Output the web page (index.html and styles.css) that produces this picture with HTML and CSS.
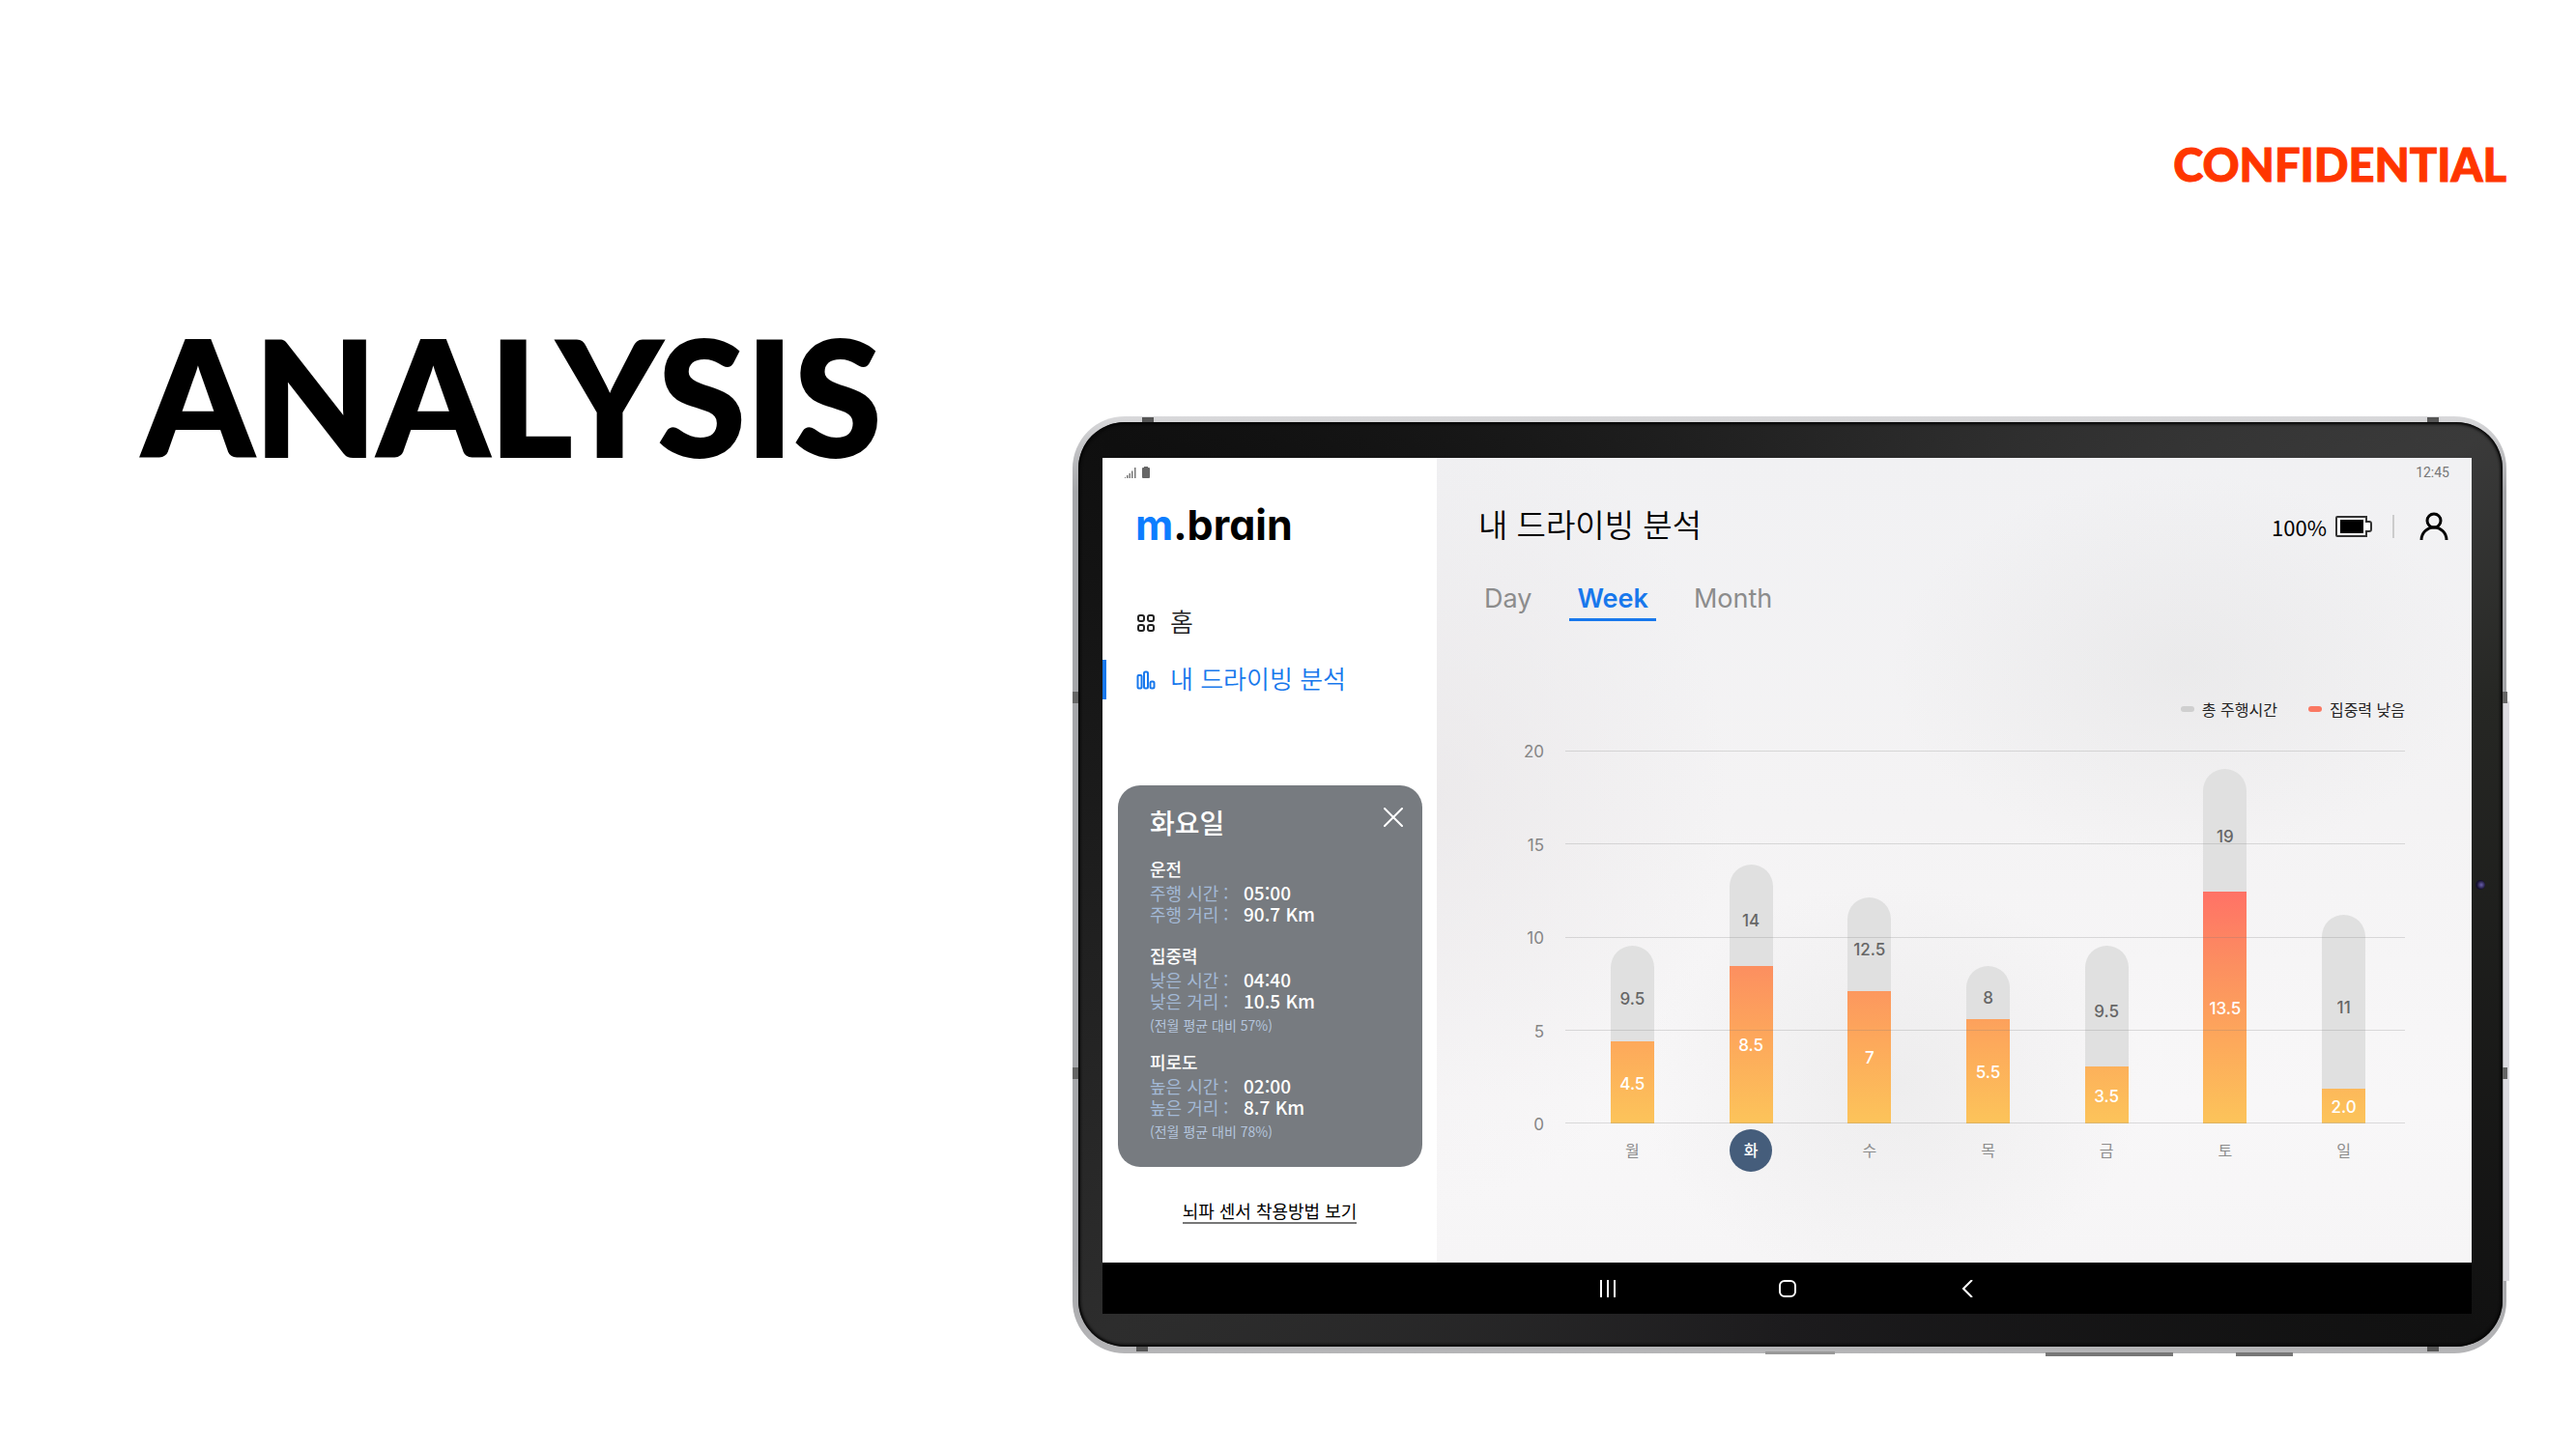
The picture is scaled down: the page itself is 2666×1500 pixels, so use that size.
FILE: index.html
```html
<!DOCTYPE html>
<html lang="ko">
<head>
<meta charset="utf-8">
<meta name="viewport" content="width=device-width, initial-scale=1">
<title>m.brain – Analysis</title>
<link rel="stylesheet" href="styles.css">
</head>
<body>
<div class="slide">
  <header class="slide-header"><p class="confidential">CONFIDENTIAL</p></header>
  <div class="slide-body">
    <h1 class="slide-title">ANALYSIS</h1>
    <div class="device">
      <span class="mark mark-tl"></span><span class="mark mark-tr"></span>
      <span class="mark mark-bl"></span><span class="mark mark-br"></span>
      <span class="seam seam-l1"></span><span class="seam seam-l2"></span>
      <span class="rail"></span>
      <span class="seam seam-r1"></span><span class="seam seam-r2"></span>
      <span class="key key-port"></span><span class="key key-volume"></span><span class="key key-power"></span>
      <div class="bezel">
        <span class="camera"></span>
        <div class="screen">
          <div class="app">
            <aside class="sidebar">
              <div class="status status-left">
                <svg width="12" height="12" viewBox="0 0 12 12" fill="#777"><path d="M0 12v-1h1v1zM2 12v-3h1.500v3zM4.500 12V7H6v5zM7 12V4.500h1.500V12zM10 12V1h1.500v11z"/></svg>
                <svg width="8" height="12" viewBox="0 0 8 12" fill="#666"><path d="M2 0h4v1h1q1 0 1 1v9q0 1-1 1H1q-1 0-1-1V2q0-1 1-1h1z"/></svg>
              </div>
              <div class="logo"><span class="logo-m">m</span>.brain</div>
              <nav class="menu">
                <a class="menu-item" href="#home">
                  <svg width="20" height="20" viewBox="0 0 20 20" fill="none" stroke="#222" stroke-width="2"><rect x="2" y="2" width="6" height="6" rx="2"/><rect x="12" y="2" width="6" height="6" rx="2"/><rect x="2" y="12" width="6" height="6" rx="2"/><rect x="12" y="12" width="6" height="6" rx="2"/></svg>
                  <span>홈</span>
                </a>
                <a class="menu-item menu-item-active" href="#analysis" aria-current="page">
                  <svg width="20" height="20" viewBox="0 0 20 20" fill="none" stroke="#1878ec" stroke-width="2"><rect x="1.500" y="5" width="4" height="13.500" rx="1"/><rect x="8" y="1.500" width="4" height="17" rx="1.500"/><rect x="14.500" y="11.500" width="4" height="7" rx="1.500"/></svg>
                  <span>내 드라이빙 분석</span>
                </a>
              </nav>
              <section class="card">
                <div class="card-head">
                  <h2 class="card-title">화요일</h2>
                  <button class="close" type="button" aria-label="닫기"><svg width="20" height="20" viewBox="0 0 20 20" stroke="#fff" stroke-width="2" stroke-linecap="round"><path d="M1 1l18 18M19 1L1 19"/></svg></button>
                </div>
                <div class="group">
                  <h3>운전</h3>
                  <dl><dt>주행 시간 :</dt><dd>05:00</dd><dt>주행 거리 :</dt><dd>90.7 Km</dd></dl>
                </div>
                <div class="group">
                  <h3>집중력</h3>
                  <dl><dt>낮은 시간 :</dt><dd>04:40</dd><dt>낮은 거리 :</dt><dd>10.5 Km</dd></dl>
                  <p>(전월 평균 대비 57%)</p>
                </div>
                <div class="group">
                  <h3>피로도</h3>
                  <dl><dt>높은 시간 :</dt><dd>02:00</dd><dt>높은 거리 :</dt><dd>8.7 Km</dd></dl>
                  <p>(전월 평균 대비 78%)</p>
                </div>
              </section>
              <a class="guide" href="#guide">뇌파 센서 착용방법 보기</a>
            </aside>
            <main class="main">
              <div class="status status-right">12:45</div>
              <div class="main-head">
                <h2 class="main-title">내 드라이빙 분석</h2>
                <div class="tools">
                  <span class="charge">100%</span>
                  <svg width="38" height="22" viewBox="0 0 38 22"><path d="M2 1h30v5h3q2 0 2 2v6q0 2-2 2h-3v5H2q-1 0-1-1V2q0-1 1-1z" fill="#fff" stroke="#333" stroke-width="2"/><path d="M5 4h24v14H5z"/></svg>
                  <span class="divider"></span>
                  <button class="user" type="button" aria-label="내 정보"><svg width="30" height="30" viewBox="0 0 30 30" fill="none" stroke="#000" stroke-width="3"><circle cx="15" cy="9" r="7"/><path d="M2 29a13 13 0 0 1 26 0"/></svg></button>
                </div>
              </div>
              <div class="tabs" role="tablist">
                <button class="tab" type="button" role="tab" aria-selected="false">Day</button>
                <button class="tab tab-active" type="button" role="tab" aria-selected="true">Week</button>
                <button class="tab" type="button" role="tab" aria-selected="false">Month</button>
              </div>
              <div class="legend"><span class="legend-item">총 주행시간</span><span class="legend-item legend-low">집중력 낮음</span></div>
              <div class="chart">
                <div class="y-axis"><span>20</span><span>15</span><span>10</span><span>5</span><span>0</span></div>
                <div class="plot">
                  <div class="bars">
                    <div class="bar" style="--total:9.55"><span class="rest">9.5</span><span class="low" style="--low:4.4">4.5</span></div>
                    <div class="bar" style="--total:13.9"><span class="rest">14</span><span class="low" style="--low:8.45">8.5</span></div>
                    <div class="bar" style="--total:12.15"><span class="rest">12.5</span><span class="low" style="--low:7.1">7</span></div>
                    <div class="bar" style="--total:8.45"><span class="rest">8</span><span class="low" style="--low:5.6">5.5</span></div>
                    <div class="bar" style="--total:9.55"><span class="rest">9.5</span><span class="low" style="--low:3.05">3.5</span></div>
                    <div class="bar" style="--total:19"><span class="rest">19</span><span class="low" style="--low:12.45">13.5</span></div>
                    <div class="bar" style="--total:11.2"><span class="rest">11</span><span class="low" style="--low:1.85">2.0</span></div>
                  </div>
                  <div class="lines"><i></i><i></i><i></i><i></i><i></i></div>
                </div>
                <div class="x-axis"><span>월</span><span class="today">화</span><span>수</span><span>목</span><span>금</span><span>토</span><span>일</span></div>
              </div>
            </main>
          </div>
          <nav class="system-bar">
            <button type="button" aria-label="최근 앱"><svg width="18" height="18" viewBox="0 0 18 18" stroke="#fff" stroke-width="2"><path d="M2 0v18M9 0v18M16 0v18"/></svg></button>
            <button type="button" aria-label="홈 화면"><svg width="18" height="18" viewBox="0 0 18 18" fill="none" stroke="#fff" stroke-width="2"><rect x="1" y="1" width="16" height="16" rx="5"/></svg></button>
            <button type="button" aria-label="뒤로"><svg width="18" height="18" viewBox="0 0 18 18" fill="none" stroke="#fff" stroke-width="2"><path d="M14 0L5 9l9 9"/></svg></button>
          </nav>
        </div>
      </div>
    </div>
  </div>
</div>
</body>
</html>
```
FILE: styles.css
```css
* { box-sizing: border-box; margin: 0; }

body {
  background: #fff;
  color: #000;
  font-family: "Noto Sans CJK KR", sans-serif;
}

button { padding: 0; border: 0; background: none; font: inherit; cursor: pointer; }
a { color: inherit; text-decoration: none; }
svg { display: block; flex: none; }

.slide { min-height: 100vh; padding: 138px 72px 96px 147px; }
.slide-header { display: flex; justify-content: flex-end; }
.confidential { font: 900 47px/64px Lato, sans-serif; color: #ff3600; -webkit-text-stroke: 1px #ff3600; }
.slide-body { display: grid; grid-template-columns: 963fr 1484fr; align-items: start; padding-top: 109px; }
.slide-title { font: 900 165px/196px Lato, sans-serif; -webkit-text-stroke: 2px #000; }

/* Tablet body */
.device {
  position: relative;
  margin-top: 120px;
  padding: 6px 4px 7px 6px;
  border-radius: 54px;
  background: linear-gradient(to bottom, #d9d9db, #a5a6a9 8%, #a5a6a9 90%, #b5b5b7);
}
.bezel {
  position: relative;
  padding: 37px 32px 34px 25px;
  border-radius: 48px;
  background: conic-gradient(#242424, #3a3a3a 57deg, #262724 75deg, #111 123deg, #1c1b1d 180deg, #2d2d2d 237deg, #0f0f0f 303deg, #242424);
  box-shadow: inset 0 0 3px 2px #050505;
}
.mark, .seam, .rail, .key, .camera { position: absolute; }
.mark { width: 12px; height: 5px; background: #555; }
.mark-tl { top: 1px; left: 72px; }
.mark-tr { top: 1px; right: 70px; }
.mark-bl { bottom: 2px; left: 66px; }
.mark-br { bottom: 2px; right: 70px; }
.seam { width: 6px; height: 12px; background: #666; }
.seam-l1 { left: 0; top: 285px; }
.seam-l2 { left: 0; top: 674px; }
.seam-r1 { right: -1px; top: 285px; }
.seam-r2 { right: -1px; top: 674px; }
.rail { right: -3px; top: 295px; width: 6px; height: 600px; background: #dcdbe0; }
.key { bottom: -3px; height: 4px; background: #777; }
.key-port { left: 717px; width: 72px; height: 3px; background: #999; bottom: -1px; }
.key-volume { right: 345px; width: 132px; }
.key-power { right: 221px; width: 59px; }
.camera { top: 474px; right: 18px; width: 10px; height: 10px; border-radius: 50%; background: radial-gradient(circle at 60% 50%, #6a5fae, #15102c 60%); }

.app { display: grid; grid-template-columns: 346fr 1071fr; background: #fff; }
.status { display: flex; align-items: center; height: 30px; }

/* Sidebar */
.sidebar { display: flex; flex-direction: column; }
.status-left { gap: 6px; padding-left: 23px; }
.logo {
  margin-top: 12px;
  padding-left: 34px;
  font: 700 43px/54px Inter, sans-serif;
  font-feature-settings: "cv11";
}
.logo-m { color: #0d7dff; }
.menu { display: flex; flex-direction: column; gap: 18px; margin-top: 54px; }
.menu-item {
  display: flex;
  align-items: center;
  gap: 15px;
  min-height: 41px;
  padding-left: 31px;
  border-left: 4px solid transparent;
  font-size: 26px;
  font-weight: 350;
  color: #222;
}
.menu-item span { padding-bottom: 3px; line-height: 38px; }
.menu-item-active { border-left-color: #1878ec; color: #1878ec; }
.card {
  display: flex;
  flex-direction: column;
  gap: 14px;
  margin: 89px 15px 0 16px;
  padding: 18px 20px 27px 33px;
  border-radius: 23px;
  background: #777b80;
  color: #fff;
}
.card-head { display: flex; justify-content: space-between; align-items: flex-start; }
.card-title { font-size: 28px; font-weight: 500; line-height: 40px; }
.close { padding-top: 5px; }
.group h3 { font-size: 18px; font-weight: 500; line-height: 28px; }
.group dl { display: grid; grid-template-columns: 97px 1fr; line-height: 22px; padding-bottom: 4px; }
.group dt { font-size: 18px; color: #a3b9d6; }
.group dd { margin: 0; font-size: 19px; font-weight: 500; }
.group p { font-size: 14px; line-height: 20px; color: #b4c5dd; }
.guide {
  align-self: center;
  margin-top: 33px;
  border-bottom: 2px solid #777;
  font-size: 18px;
  line-height: 24px;
}

/* Main pane */
.main {
  padding-bottom: 94px;
  background:
    radial-gradient(ellipse 300px 200px at 72% 26%, rgba(205, 205, 205, .22), transparent),
    radial-gradient(ellipse 260px 210px at 44% 78%, rgba(205, 205, 205, .24), transparent),
    radial-gradient(ellipse 300px 420px at 0 42%, rgba(222, 218, 220, .35), transparent),
    linear-gradient(#f1f1f3, #f4f3f4 45%, #f8f7f8 80%, #f6f5f6);
}
.status-right { justify-content: flex-end; padding-right: 23px; font: 14px/30px Roboto, sans-serif; color: #777; }
.main-head { display: flex; justify-content: space-between; align-items: center; height: 44px; margin-top: 19px; padding: 0 24px 0 43px; }
.main-title { padding-bottom: 6px; font-size: 33px; font-weight: 350; line-height: 44px; }
.tools { display: flex; align-items: center; gap: 9px; }
.charge { font-size: 22px; line-height: 30px; }
.divider { width: 2px; height: 24px; margin: 0 17px 0 12px; background: #ccc; }
.tabs { display: flex; gap: 31px; margin-top: 35px; padding-left: 41px; }
.tab { padding: 0 8px 2px; border-bottom: 3px solid transparent; font: 400 27px/36px Inter, sans-serif; color: #8c8c8c; }
.tab-active { border-bottom-color: #1878ec; font-weight: 600; color: #1878ec; }
.legend { display: flex; justify-content: flex-end; gap: 32px; margin-top: 79px; padding-right: 69px; font-size: 16px; line-height: 24px; color: #222; }
.legend-item { display: flex; align-items: center; gap: 8px; }
.legend-item::before { content: ""; width: 14px; height: 6px; border-radius: 3px; background: #cfcfcf; }
.legend-low::before { background: #fa7862; }

.chart { display: grid; grid-template-columns: 111px 1fr; column-gap: 22px; margin-top: 31px; padding-right: 69px; }
.y-axis { display: flex; flex-direction: column; justify-content: space-between; margin: -9px 0 -11px; text-align: right; font: 17px/20px Inter, sans-serif; color: #858585; }
.plot { position: relative; height: 386px; }
.lines { position: absolute; inset: 0; display: flex; flex-direction: column; justify-content: space-between; }
.lines i { height: 1px; background: rgba(120, 120, 120, .24); }
.bars { display: grid; grid-template-columns: repeat(7, 1fr); align-items: end; justify-items: center; height: 100%; padding: 0 2px 0 8px; }
.bar {
  display: flex;
  flex-direction: column;
  width: 45px;
  height: calc(var(--total) * 5%);
  border-radius: 23px 23px 0 0;
  overflow: hidden;
  background: #e0e0e0;
  font: 500 17px/20px Inter, sans-serif;
}
.rest, .low { display: flex; align-items: center; justify-content: center; }
.rest { flex: 1; padding-top: 12px; color: #666; }
.low {
  height: calc(var(--low) * 386px / 20);
  padding-top: 2px;
  color: #fff;
  background: linear-gradient(to top, #fcc45a, #fda85b 36%, #fc8f60 68%, #ff7266) bottom / 100% 240px no-repeat;
}
.x-axis { grid-column: 2; display: grid; grid-template-columns: repeat(7, 1fr); justify-items: center; margin-top: 6px; padding: 0 2px 0 8px; font-size: 16px; line-height: 42px; color: #8c8c8c; }
.today { width: 44px; height: 44px; border-radius: 50%; background: #455d7b; color: #fff; text-align: center; font-weight: 500; }

.system-bar { display: flex; justify-content: center; align-items: center; gap: 168px; height: 53px; background: #000; }
```
